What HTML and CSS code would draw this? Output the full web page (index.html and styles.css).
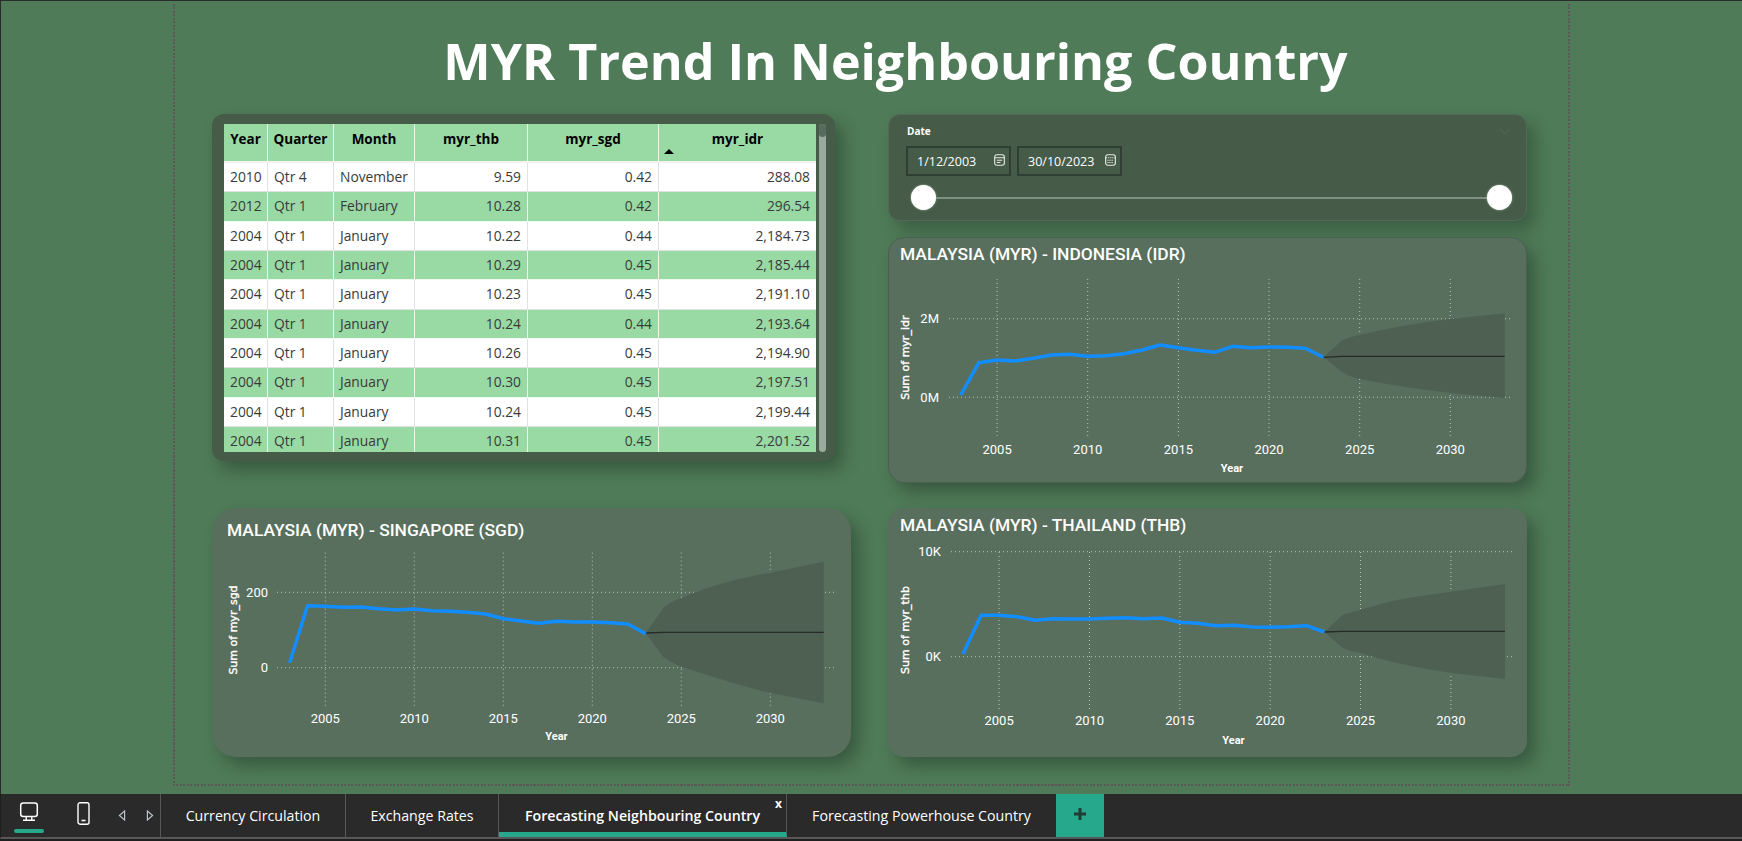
FILE: index.html
```html
<!DOCTYPE html>
<html lang="en">
<head>
<meta charset="utf-8">
<title>MYR Trend In Neighbouring Country</title>
<link rel="stylesheet" href="styles.css">
</head>
<body>
<main class="canvas">
  <div class="frame">
    <h1 class="page-title">MYR Trend In Neighbouring Country</h1>
    <div class="dashboard">
      <section class="table-card">
        <div class="table-clip">
          <table class="data-table">
            <colgroup>
              <col class="c-year"><col class="c-qtr"><col class="c-month"><col class="c-thb"><col class="c-sgd"><col class="c-idr">
            </colgroup>
            <thead>
              <tr><th>Year</th><th>Quarter</th><th>Month</th><th>myr_thb</th><th>myr_sgd</th><th class="sorted">myr_idr<span class="sort-arrow"></span></th></tr>
            </thead>
            <tbody>
              <tr><td>2010</td><td>Qtr 4</td><td>November</td><td class="num">9.59</td><td class="num">0.42</td><td class="num">288.08</td></tr>
              <tr><td>2012</td><td>Qtr 1</td><td>February</td><td class="num">10.28</td><td class="num">0.42</td><td class="num">296.54</td></tr>
              <tr><td>2004</td><td>Qtr 1</td><td>January</td><td class="num">10.22</td><td class="num">0.44</td><td class="num">2,184.73</td></tr>
              <tr><td>2004</td><td>Qtr 1</td><td>January</td><td class="num">10.29</td><td class="num">0.45</td><td class="num">2,185.44</td></tr>
              <tr><td>2004</td><td>Qtr 1</td><td>January</td><td class="num">10.23</td><td class="num">0.45</td><td class="num">2,191.10</td></tr>
              <tr><td>2004</td><td>Qtr 1</td><td>January</td><td class="num">10.24</td><td class="num">0.44</td><td class="num">2,193.64</td></tr>
              <tr><td>2004</td><td>Qtr 1</td><td>January</td><td class="num">10.26</td><td class="num">0.45</td><td class="num">2,194.90</td></tr>
              <tr><td>2004</td><td>Qtr 1</td><td>January</td><td class="num">10.30</td><td class="num">0.45</td><td class="num">2,197.51</td></tr>
              <tr><td>2004</td><td>Qtr 1</td><td>January</td><td class="num">10.24</td><td class="num">0.45</td><td class="num">2,199.44</td></tr>
              <tr><td>2004</td><td>Qtr 1</td><td>January</td><td class="num">10.31</td><td class="num">0.45</td><td class="num">2,201.52</td></tr>
            </tbody>
          </table>
        </div>
        <div class="scrollbar"><div class="scroll-thumb"></div></div>
      </section>

      <div class="right-top">
        <section class="slicer">
          <div class="slicer-head">
            <span class="slicer-label">Date</span>
            <svg class="chevron" width="12" height="7" viewBox="0 0 12 7"><path d="M1 1l5 5 5-5" fill="none" stroke="#56695a" stroke-width="1"/></svg>
          </div>
          <div class="date-row">
            <div class="date-box"><span>1/12/2003</span>
              <svg class="cal" width="11" height="12" viewBox="0 0 12 13"><rect x=".7" y=".7" width="10.6" height="11.6" rx="2.4" fill="none" stroke="#e4e9e4" stroke-width="1.2"/><path d="M1 4h10M3 6.8h6M3 9.3h4" stroke="#e4e9e4" stroke-width="1.1"/></svg>
            </div>
            <div class="date-box"><span>30/10/2023</span>
              <svg class="cal" width="11" height="12" viewBox="0 0 12 13"><rect x=".7" y=".7" width="10.6" height="11.6" rx="2.4" fill="none" stroke="#e4e9e4" stroke-width="1.2"/><path d="M1 4h10M2.5 6.8h7M2.5 9.3h7" stroke="#e4e9e4" stroke-width="1.1" stroke-dasharray="1.4 .9"/></svg>
            </div>
          </div>
          <div class="range">
            <span class="knob"></span>
            <span class="track"></span>
            <span class="knob"></span>
          </div>
        </section>

        <section class="chart-card chart-idr">
          <h2 class="chart-title t-idr">MALAYSIA (MYR) - INDONESIA (IDR)</h2>
          <svg class="chart" width="639" height="212" viewBox="888 271 639 212">
            <g class="grid">
              <path d="M997.1 279V438M1087.7 279V438M1178.4 279V438M1269 279V438M1359.7 279V438M1450.3 279V438"/>
              <path d="M949 318.7H1511M949 397.3H1511"/>
            </g>
            <path class="band" d="M1323.4 357L1341.5 340.7Q1350 336.5 1359.7 335Q1400 325 1450.3 319L1504.7 313.3V398.3L1450.3 393Q1400 387 1359.7 379Q1350 377 1341.5 371.7Z"/>
            <polyline class="forecast" points="1323.4,357.3 1341.5,356.4 1504.7,356.3"/>
            <polyline class="trend" points="960.8,395 978.9,362.7 997.1,360 1015.2,361 1033.3,358.3 1051.5,355 1069.6,354.3 1087.7,356.3 1105.8,355.7 1124,353.7 1142.1,350 1160.2,345 1178.4,347.7 1196.5,350.3 1214.6,352.3 1232.8,346.3 1250.9,347.7 1269,347 1287.1,347.3 1305.3,348.3 1323.4,357.3"/>
            <text class="tick end" x="939" y="323.4">2M</text>
            <text class="tick end" x="939" y="402">0M</text>
            <g class="tick mid">
              <text x="997.1" y="454">2005</text><text x="1087.7" y="454">2010</text><text x="1178.4" y="454">2015</text><text x="1269" y="454">2020</text><text x="1359.7" y="454">2025</text><text x="1450.3" y="454">2030</text>
            </g>
            <text class="axis-x" x="1232" y="472">Year</text>
            <text class="axis-y" transform="translate(909 357.6) rotate(-90)">Sum of myr_idr</text>
          </svg>
        </section>
      </div>

      <section class="chart-card chart-sgd">
        <h2 class="chart-title t-sgd">MALAYSIA (MYR) - SINGAPORE (SGD)</h2>
        <svg class="chart" width="639" height="215" viewBox="212 542 639 215">
          <g class="grid">
            <path d="M325.3 552.7V706.7M414.3 552.7V706.7M503.3 552.7V706.7M592.3 552.7V706.7M681.3 552.7V706.7M770.3 552.7V706.7"/>
            <path d="M277 592.3H834M277 667.7H834"/>
          </g>
          <path class="band" d="M645.7 633L663.5 607.7Q672 601 681.3 598Q700 590 716.9 585Q745 577 770.3 572.7L823.7 561.7V703.3L770.3 693Q745 687 716.9 678Q700 673 681.3 666.7Q672 663 663.5 657.3Z"/>
          <polyline class="forecast" points="645.7,633 663.5,632.4 823.7,632.3"/>
          <polyline class="trend" points="289.7,662.7 307.5,605.7 325.3,606.3 343.1,607.3 360.9,607 378.7,608.7 396.5,610 414.3,609 432.1,610.7 449.9,611.3 467.7,612.3 485.5,614 503.3,618.7 521.1,621 538.9,623.3 556.7,621.3 574.5,622 592.3,622 610.1,622.7 627.9,624 645.7,633.7"/>
          <text class="tick end" x="268" y="597">200</text>
          <text class="tick end" x="268" y="672.4">0</text>
          <g class="tick mid">
            <text x="325.3" y="723">2005</text><text x="414.3" y="723">2010</text><text x="503.3" y="723">2015</text><text x="592.3" y="723">2020</text><text x="681.3" y="723">2025</text><text x="770.3" y="723">2030</text>
          </g>
          <text class="axis-x" x="556.5" y="740">Year</text>
          <text class="axis-y" transform="translate(236.5 630) rotate(-90)">Sum of myr_sgd</text>
        </svg>
      </section>

      <section class="chart-card chart-thb">
        <h2 class="chart-title t-thb">MALAYSIA (MYR) - THAILAND (THB)</h2>
        <svg class="chart" width="639" height="215" viewBox="888 542 639 215">
          <g class="grid">
            <path d="M999.1 552V710.7M1089.5 552V710.7M1179.8 552V710.7M1270.2 552V710.7M1360.5 552V710.7M1450.9 552V710.7"/>
            <path d="M951 551.7H1513.4M951 656.7H1513.4"/>
          </g>
          <path class="band" d="M1324.4 632L1342.5 615Q1350 612 1360.5 610Q1380 604 1396.7 600Q1425 595 1450.9 591.7L1505 584V679L1450.9 673Q1425 669 1396.7 663Q1380 659 1360.5 653Q1350 651 1342.5 647.7Z"/>
          <polyline class="forecast" points="1324.4,632 1342.5,631.4 1505,631.3"/>
          <polyline class="trend" points="963,654 981.1,615.3 999.1,615.3 1017.2,616.7 1035.3,620.3 1053.4,618.7 1071.4,619 1089.5,619 1107.6,618.3 1125.6,617.7 1143.7,618.7 1161.8,618 1179.8,622.3 1197.9,623.3 1216,625.7 1234.1,625.3 1252.1,627 1270.2,627.3 1288.3,626.7 1306.3,625.7 1324.4,632"/>
          <text class="tick end" x="941" y="556.4">10K</text>
          <text class="tick end" x="941" y="661.4">0K</text>
          <g class="tick mid">
            <text x="999.1" y="725">2005</text><text x="1089.5" y="725">2010</text><text x="1179.8" y="725">2015</text><text x="1270.2" y="725">2020</text><text x="1360.5" y="725">2025</text><text x="1450.9" y="725">2030</text>
          </g>
          <text class="axis-x" x="1233.5" y="744">Year</text>
          <text class="axis-y" transform="translate(909 630) rotate(-90)">Sum of myr_thb</text>
        </svg>
      </section>
    </div>
  </div>
</main>

<nav class="tabbar">
  <div class="view-tools">
    <div class="device device-desktop">
      <svg width="20" height="20" viewBox="0 0 20 20"><rect x="1.7" y="1" width="16.6" height="13.6" rx="2.5" fill="none" stroke="#fff" stroke-width="1.5"/><path d="M7.2 15v2.6M12.8 15v2.6M4 18.3h12" stroke="#fff" stroke-width="1.4" fill="none"/></svg>
      <span class="device-mark"></span>
    </div>
    <svg class="phone" width="13" height="23" viewBox="0 0 13 23"><rect x="1" y=".8" width="11" height="21.4" rx="2" fill="none" stroke="#fff" stroke-width="1.4"/><path d="M4.5 18.5h4" stroke="#fff" stroke-width="1.6"/></svg>
    <svg class="nav-prev" width="8" height="11" viewBox="0 0 8 11"><path d="M6.6 1L1.4 5.5l5.2 4.5z" fill="none" stroke="#b8c0c8" stroke-width="1.2"/></svg>
    <svg class="nav-next" width="8" height="11" viewBox="0 0 8 11"><path d="M1.4 1l5.2 4.5-5.2 4.5z" fill="none" stroke="#b8c0c8" stroke-width="1.2"/></svg>
  </div>
  <div class="tab tab-1">Currency Circulation</div>
  <div class="tab tab-2">Exchange Rates</div>
  <div class="tab tab-3 active">Forecasting Neighbouring Country<span class="tab-close">x</span></div>
  <div class="tab tab-4">Forecasting Powerhouse Country</div>
  <div class="add-tab">
    <svg width="14" height="14" viewBox="0 0 14 14"><path d="M7 1v12M1 7h12" stroke="#223b33" stroke-width="3"/></svg>
  </div>
</nav>
</body>
</html>
```

FILE: styles.css
```css
* { box-sizing: border-box; }

html, body { margin: 0; height: 100%; }

body {
  width: 1742px;
  height: 841px;
  overflow: hidden;
  display: flex;
  flex-direction: column;
  background: #1f1f1f;
  font-family: "Open Sans", "Noto Sans", sans-serif;
}

.canvas {
  height: 794px;
  flex: none;
  background: #4f7b58;
  border-top: 1px solid #2b2b2b;
  border-left: 1px solid #2b2b2b;
  padding: 3px 0 0 172px;
}

.frame {
  width: 1397px;
  height: 782px;
  padding: 1px 0 0 39px;
  background-image:
    repeating-linear-gradient(to right, #5c585a 0 2px, transparent 2px 3.5px),
    repeating-linear-gradient(to bottom, #5c585a 0 2px, transparent 2px 3.5px),
    repeating-linear-gradient(to bottom, #5c585a 0 2px, transparent 2px 3.5px);
  background-size: 100% 2px, 2px 100%, 2px 100%;
  background-position: 0 100%, 0 0, 100% 0;
  background-repeat: no-repeat;
}

.page-title {
  margin: 0;
  height: 109px;
  width: 1315px;
  padding: 1px 0 0 52px;
  text-align: center;
  color: #fff;
  font-size: 50.2px;
  font-weight: 700;
  line-height: 109px;
  white-space: nowrap;
}

.dashboard {
  display: grid;
  grid-template-columns: 639px 639px;
  grid-template-rows: 369px 249px;
  column-gap: 37px;
  row-gap: 25px;
}

/* Table */
.table-card {
  width: 623px;
  height: 347px;
  display: flex;
  gap: 3px;
  padding: 10px 9px 10px 12px;
  background: #465c48;
  border-radius: 12px;
  box-shadow: 8px 9px 16px rgba(30, 50, 35, .45);
}

.table-clip {
  width: 592px;
  height: 328px;
  overflow: hidden;
}

.data-table {
  width: 592px;
  table-layout: fixed;
  border-collapse: separate;
  border-spacing: 0;
  font-size: 13.8px;
  color: #3a3a3a;
}

.c-year { width: 44px; }
.c-qtr { width: 66px; }
.c-month { width: 81px; }
.c-thb { width: 113px; }
.c-sgd { width: 131px; }
.c-idr { width: 157px; }

.data-table th {
  position: relative;
  height: 39px;
  padding: 6px 0 0;
  vertical-align: top;
  background: #98d9a4;
  color: #000;
  font-weight: 700;
  font-size: 13.5px;
  line-height: 18px;
  text-align: center;
  border-right: 1px solid #eaf6ec;
  border-bottom: 2px solid #f2f2f2;
}

.data-table th:last-child { border-right: 0; }

.sort-arrow {
  position: absolute;
  left: 5px;
  top: 25px;
  width: 0;
  height: 0;
  border-left: 5px solid transparent;
  border-right: 5px solid transparent;
  border-bottom: 5px solid #000;
}

.data-table td {
  height: 29.33px;
  padding: 0 6px;
  background: #fff;
  line-height: 18px;
  white-space: nowrap;
  border-right: 1px solid #e2e2e2;
  border-bottom: 1px solid #e2e2e2;
}

.data-table td:last-child { border-right: 0; }
.data-table tr:nth-child(even) td {
  background: #98d9a4;
  border-right-color: #eef8f0;
  border-bottom-color: #eef8f0;
}

.data-table .num { text-align: right; }

.scrollbar {
  width: 7px;
  height: 328px;
  background: #9aaa9e;
  border-radius: 4px;
}

.scroll-thumb {
  width: 7px;
  height: 13px;
  background: #596b5d;
  border-radius: 4px;
}

/* Slicer */
.right-top {
  display: flex;
  flex-direction: column;
  gap: 16px;
}

.slicer {
  height: 107px;
  padding: 9px 15px 0 18px;
  background: #465c48;
  border: 1px solid #52695a;
  border-radius: 12px;
  box-shadow: 8px 9px 16px rgba(30, 50, 35, .4);
}

.slicer-head {
  display: flex;
  justify-content: space-between;
  align-items: center;
  height: 14px;
}

.slicer-label {
  color: #fff;
  font-size: 10px;
  font-weight: 700;
}

.date-row {
  display: flex;
  gap: 6px;
  margin: 8px 0 0 -1px;
}

.date-box {
  position: relative;
  width: 105px;
  height: 30px;
  padding: 0 0 0 9px;
  display: flex;
  align-items: center;
  border: 2px solid #2f3f33;
  color: #fff;
  font-size: 12.5px;
}

.date-box .cal {
  position: absolute;
  right: 4px;
  top: 6px;
}

.range {
  display: flex;
  align-items: center;
  margin: 9px 0 0 4px;
  width: 601px;
}

.knob {
  flex: none;
  width: 25px;
  height: 25px;
  background: #fff;
  border-radius: 50%;
  box-shadow: 0 0 2px rgba(255, 255, 255, .6);
}

.track {
  flex: 1;
  height: 2px;
  background: #7f9083;
}

/* Chart cards */
.chart-card {
  background: #596f5e;
  box-shadow: 8px 9px 16px rgba(30, 50, 35, .45);
}

.chart-idr {
  height: 246px;
  border: 1px solid #4a6050;
  border-radius: 16px;
  position: relative;
}

.chart-sgd { height: 249px; border-radius: 24px; }
.chart-thb { height: 249px; border-radius: 16px; }

.chart-title {
  margin: 0;
  height: 34px;
  color: #fff;
  font-family: "Roboto", sans-serif;
  font-size: 17.4px;
  font-weight: 500;
  line-height: 20px;
  white-space: nowrap;
}

.t-idr { padding: 6px 0 0 11px; }
.t-sgd { padding: 12px 0 0 15px; }
.t-thb { padding: 7px 0 0 12px; }

.chart { display: block; }
.chart-idr .chart { margin: -1px 0 0 -1px; }

.grid path {
  fill: none;
  stroke: #b9c6bb;
  stroke-width: 1;
  stroke-dasharray: 1 3;
}

.band { fill: #4e6052; }
.forecast { fill: none; stroke: #262b27; stroke-width: 1.3; }
.trend { fill: none; stroke: #118dff; stroke-width: 3.5; stroke-linejoin: round; }

.tick {
  fill: #fff;
  font-family: "Roboto", sans-serif;
  font-size: 13px;
}

.end { text-anchor: end; }
.mid { text-anchor: middle; }

.axis-x {
  fill: #fff;
  font-family: "Roboto", sans-serif;
  font-size: 11px;
  font-weight: 700;
  text-anchor: middle;
}

.axis-y {
  fill: #fff;
  stroke: #fff;
  stroke-width: .35;
  font-family: "DejaVu Sans", sans-serif;
  font-size: 11px;
  text-anchor: middle;
}

/* Tab bar */
.tabbar {
  height: 45px;
  flex: none;
  display: flex;
  background: #2a2a2a;
  border-bottom: 2px solid #585858;
  border-left: 1px solid #1f1f1f;
  color: #fff;
  font-size: 14.2px;
}

.view-tools {
  width: 160px;
  flex: none;
  display: flex;
  align-items: flex-start;
  border-right: 1px solid #585858;
  padding-top: 8px;
}

.device-desktop {
  width: 30px;
  margin-left: 13px;
  display: flex;
  flex-direction: column;
  align-items: center;
}

.device-mark {
  width: 30px;
  height: 4px;
  margin-top: 7px;
  background: #26a88d;
  border-radius: 2px;
}

.phone { margin-left: 33px; }
.nav-prev { margin: 8px 0 0 28px; }
.nav-next { margin: 8px 0 0 20px; }

.tab {
  flex: none;
  display: flex;
  align-items: center;
  justify-content: center;
  padding-bottom: 1px;
  border-right: 1px solid #585858;
  white-space: nowrap;
}

.tab-1 { width: 185px; }
.tab-2 { width: 153px; }
.tab-3 { width: 288px; position: relative; font-weight: 600; border-bottom: 5px solid #26a88d; padding: 4px 0 0; }
.tab-4 { width: 269px; border-right: 0; }

.tab-close {
  position: absolute;
  right: 4px;
  top: 2px;
  font-size: 12px;
  font-weight: 700;
  line-height: 16px;
}

.add-tab {
  width: 48px;
  flex: none;
  display: flex;
  align-items: center;
  justify-content: center;
  padding-bottom: 4px;
  background: #26a88d;
}
```
